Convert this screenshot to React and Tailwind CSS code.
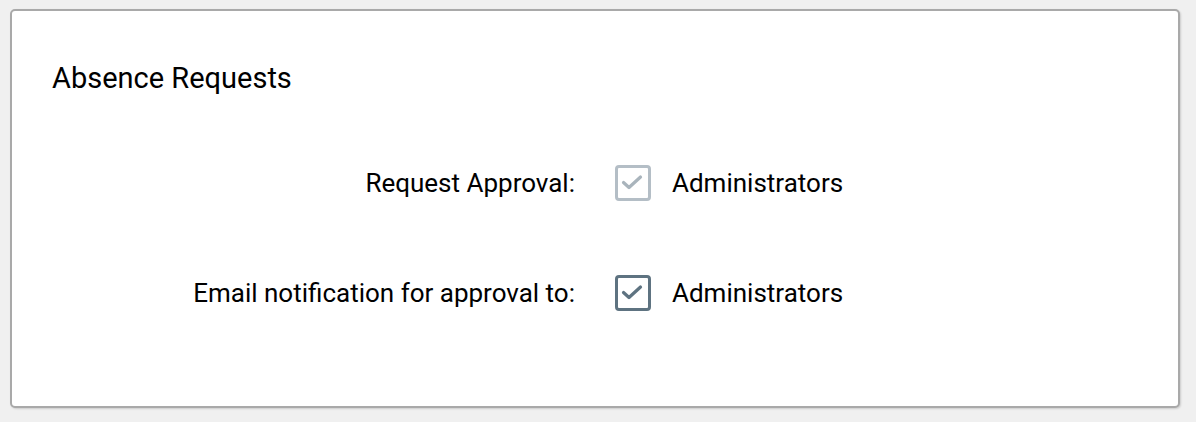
import React from "react";

function Check({ dark }) {
  return (
    <div
      className={
        "w-[36px] h-[36px] rounded-[4px] border-[3px] bg-white " +
        (dark ? "border-[#5e7381]" : "border-[#b4bec6]")
      }
    >
      <svg width="30" height="30" viewBox="0 0 30 30" fill="none">
        <path
          d="M5.5 14.5 L11 19.5 L22.5 9"
          stroke={dark ? "#5e7381" : "#a9b4bc"}
          strokeWidth="3.2"
          strokeLinecap="round"
          strokeLinejoin="round"
        />
      </svg>
    </div>
  );
}

function Row({ label, dark }) {
  return (
    <div className="flex items-center h-[36px]">
      <div className="w-[563px] text-right whitespace-nowrap">{label}</div>
      <div className="ml-[40px]">
        <Check dark={dark} />
      </div>
      <div className="ml-[21px]">Administrators</div>
    </div>
  );
}

export default function App() {
  return (
    <div
      className="w-[1196px] h-[422px] bg-[#f0f0f0] pt-[9px] pl-[10px]"
      style={{ fontFamily: "Roboto, 'Liberation Sans', sans-serif" }}
    >
      <div className="w-[1170px] h-[399px] bg-white border-2 border-[#a9a9a9] rounded-[5px] text-black text-[26px] leading-[30px] shadow-[1px_1px_2px_rgba(0,0,0,0.15)]">
        <div className="pl-[40px] pt-[50px] text-[29px] leading-[34px]">Absence Requests</div>
        <div className="mt-[70px] flex flex-col gap-[74px]">
          <Row label="Request Approval:" />
          <Row label="Email notification for approval to:" dark />
        </div>
      </div>
    </div>
  );
}
